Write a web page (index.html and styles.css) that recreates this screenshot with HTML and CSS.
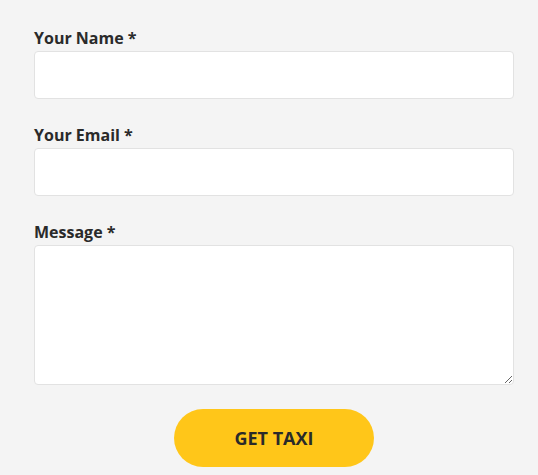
FILE: index.html
```html
<!DOCTYPE html>
<html lang="en">
<head>
    <meta charset="UTF-8">
    <meta name="viewport" content="width=device-width, initial-scale=1.0">
    <title>Contact</title>
    <link rel="stylesheet" href="styles.css">
</head>
<body>
    <form class="contact-form">
        <div class="field">
            <label for="name">Your Name *</label>
            <input type="text" id="name">
        </div>
        <div class="field">
            <label for="email">Your Email *</label>
            <input type="email" id="email">
        </div>
        <div class="field">
            <label for="message">Message *</label>
            <textarea id="message"></textarea>
        </div>
        <div class="actions">
            <button type="submit" class="btn">GET TAXI</button>
        </div>
    </form>
</body>
</html>
```

FILE: styles.css
```css
body {
    margin: 0;
    background: #f4f4f4;
    font-family: 'Open Sans', sans-serif;
    color: #2a2a2a;
}
.contact-form {
    display: flex;
    flex-direction: column;
    gap: 24px;
    padding: 26px 24px 0 34px;
}
.field {
    display: flex;
    flex-direction: column;
    gap: 1px;
}
label {
    font-size: 16px;
    font-weight: 700;
    line-height: 24px;
}
input,
textarea {
    box-sizing: border-box;
    width: 100%;
    background: #fff;
    border: 1px solid #e2e2e2;
    border-radius: 4px;
    font-family: inherit;
    font-size: 15px;
    padding: 10px 14px;
    margin: 0;
}
input {
    height: 48px;
}
textarea {
    height: 140px;
    resize: vertical;
}
.actions {
    display: flex;
    justify-content: center;
}
.btn {
    width: 200px;
    height: 58px;
    border: none;
    border-radius: 29px;
    background: #ffc619;
    font-family: inherit;
    font-size: 18px;
    font-weight: 700;
    color: #2a2a2a;
}
```
